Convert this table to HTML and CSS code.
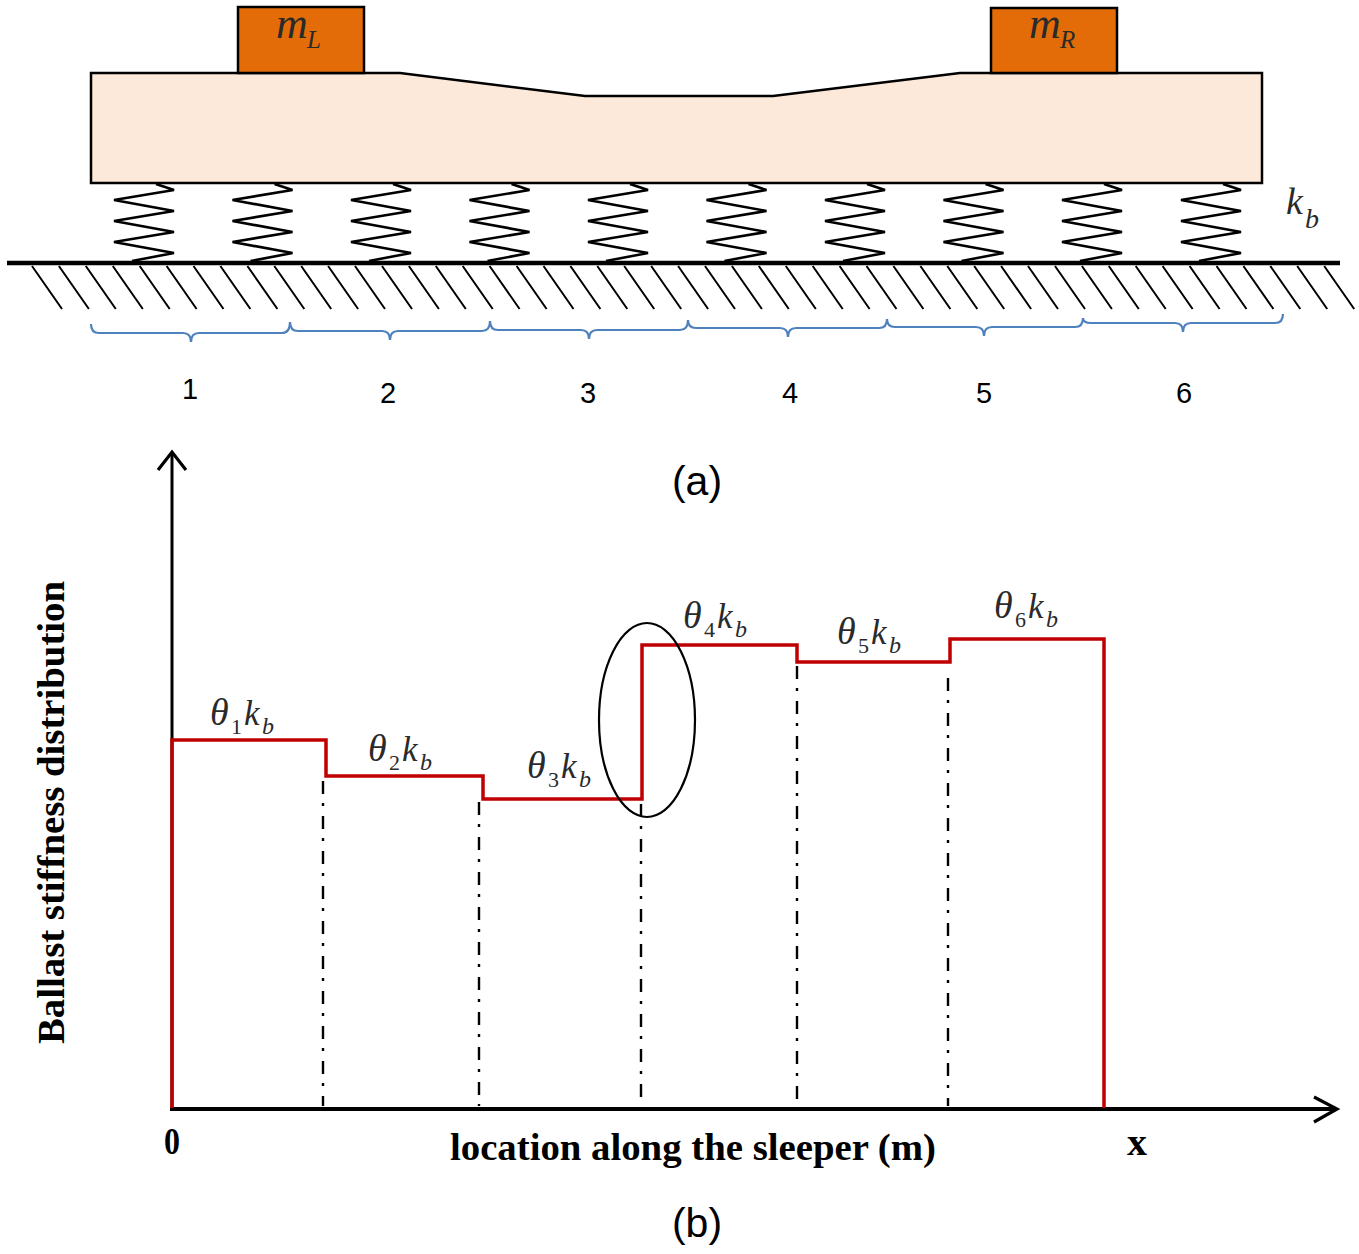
FILE: index.html
```html
<!DOCTYPE html>
<html lang="en">
<head>
<meta charset="utf-8">
<title>Ballast stiffness distribution</title>
<link rel="stylesheet" href="styles.css">
</head>
<body>
<svg class="figure" width="1359" height="1254" viewBox="0 0 1359 1254" xmlns="http://www.w3.org/2000/svg">
  <defs>
    <path id="spring" d="M12,184 L30,190 L-30,200 L30,211 L-30,221 L30,232 L-30,242 L30,253 L-12,261"/>
  </defs>

  <!-- (a) sleeper model -->
  <polygon class="sleeper" points="91,73 400,73 585,96 773,96 960,73 1262,73 1262,183 91,183"/>
  <rect class="mass" x="238" y="7" width="126" height="66"/>
  <rect class="mass" x="991" y="8" width="126" height="65"/>
  <text class="math mass-m" x="276" y="38">m</text>
  <text class="math mass-sub" x="307" y="48">L</text>
  <text class="math mass-m" x="1029" y="38">m</text>
  <text class="math mass-sub" x="1060" y="48">R</text>

  <g class="springs">
    <use href="#spring" x="144"/>
    <use href="#spring" x="262.5"/>
    <use href="#spring" x="381"/>
    <use href="#spring" x="499.5"/>
    <use href="#spring" x="618"/>
    <use href="#spring" x="736.5"/>
    <use href="#spring" x="855"/>
    <use href="#spring" x="973.5"/>
    <use href="#spring" x="1092"/>
    <use href="#spring" x="1211"/>
  </g>
  <text class="math kb-k" x="1286" y="214">k</text>
  <text class="math kb-b" x="1305" y="228">b</text>

  <line class="ground" x1="7" y1="263" x2="1340" y2="263"/>
  <path class="hatch" d="M32,266 l30,43 M58.9,266 l30,43 M85.8,266 l30,43 M112.8,266 l30,43 M139.7,266 l30,43 M166.6,266 l30,43 M193.5,266 l30,43 M220.4,266 l30,43 M247.4,266 l30,43 M274.3,266 l30,43 M301.2,266 l30,43 M328.1,266 l30,43 M355,266 l30,43 M382,266 l30,43 M408.9,266 l30,43 M435.8,266 l30,43 M462.7,266 l30,43 M489.6,266 l30,43 M516.6,266 l30,43 M543.5,266 l30,43 M570.4,266 l30,43 M597.3,266 l30,43 M624.2,266 l30,43 M651.2,266 l30,43 M678.1,266 l30,43 M705,266 l30,43 M731.9,266 l30,43 M758.8,266 l30,43 M785.8,266 l30,43 M812.7,266 l30,43 M839.6,266 l30,43 M866.5,266 l30,43 M893.4,266 l30,43 M920.4,266 l30,43 M947.3,266 l30,43 M974.2,266 l30,43 M1001.1,266 l30,43 M1028,266 l30,43 M1055,266 l30,43 M1081.9,266 l30,43 M1108.8,266 l30,43 M1135.7,266 l30,43 M1162.6,266 l30,43 M1189.6,266 l30,43 M1216.5,266 l30,43 M1243.4,266 l30,43 M1270.3,266 l30,43 M1297.2,266 l30,43 M1324.2,266 l30,43"/>

  <g class="braces">
    <path d="M91,324 Q91,333 99,333 L183,333 Q191,333 191,342 Q191,333 199,333 L282,333 Q290,333 290,322"/>
    <path d="M290,322 Q290,331 298,331 L382,331 Q390,331 390,340 Q390,331 398,331 L482,331 Q490,331 490,321"/>
    <path d="M490,321 Q490,330 498,330 L581,330 Q589,330 589,339 Q589,330 597,330 L680,330 Q688,330 688,320"/>
    <path d="M688,320 Q688,328 696,328 L780,328 Q788,328 788,337 Q788,328 796,328 L879,328 Q887,328 887,319"/>
    <path d="M887,319 Q887,327 895,327 L976,327 Q984,327 984,336 Q984,327 992,327 L1075,327 Q1083,327 1083,318"/>
    <path d="M1083,318 Q1083,323 1091,323 L1175,323 Q1183,323 1183,332 Q1183,323 1191,323 L1275,323 Q1283,323 1283,314"/>
  </g>

  <g class="seg-num">
    <text x="190" y="399">1</text>
    <text x="388" y="403">2</text>
    <text x="588" y="403">3</text>
    <text x="790" y="403">4</text>
    <text x="984" y="403">5</text>
    <text x="1184" y="403">6</text>
  </g>

  <text class="caption" x="697" y="495">(a)</text>

  <!-- (b) stiffness distribution -->
  <g class="dashdot">
    <line x1="323" y1="781" x2="323" y2="1106"/>
    <line x1="479" y1="802" x2="479" y2="1106"/>
    <line x1="641" y1="804" x2="641" y2="1106"/>
    <line x1="797" y1="666" x2="797" y2="1106"/>
    <line x1="948" y1="678" x2="948" y2="1106"/>
  </g>

  <line class="axis-y" x1="172" y1="452" x2="172" y2="1108"/>
  <polyline class="arrow" points="158,470 172,452 186,470"/>
  <line class="axis-x" x1="170" y1="1109" x2="1336" y2="1109"/>
  <polyline class="arrow" points="1314,1097 1337,1109 1314,1122"/>

  <polyline class="steps" points="172,1108 172,740 326,740 326,776 483,776 483,799 642,799 642,645 797,645 797,662 950,662 950,639 1104,639 1104,1108"/>

  <ellipse class="ring" cx="647" cy="720" rx="48" ry="97"/>

  <g class="math theta-label">
    <text class="th" x="210" y="725">θ</text><text class="num" x="231" y="734">1</text><text class="kk" x="244" y="725">k</text><text class="sub" x="262" y="734">b</text>
    <text class="th" x="368" y="761">θ</text><text class="num" x="389" y="770">2</text><text class="kk" x="402" y="761">k</text><text class="sub" x="420" y="770">b</text>
    <text class="th" x="527" y="778">θ</text><text class="num" x="548" y="787">3</text><text class="kk" x="561" y="778">k</text><text class="sub" x="579" y="787">b</text>
    <text class="th" x="683" y="628">θ</text><text class="num" x="704" y="637">4</text><text class="kk" x="717" y="628">k</text><text class="sub" x="735" y="637">b</text>
    <text class="th" x="837" y="644">θ</text><text class="num" x="858" y="653">5</text><text class="kk" x="871" y="644">k</text><text class="sub" x="889" y="653">b</text>
    <text class="th" x="994" y="618">θ</text><text class="num" x="1015" y="627">6</text><text class="kk" x="1028" y="618">k</text><text class="sub" x="1046" y="627">b</text>
  </g>

  <text class="axis-label" transform="translate(64,1044) rotate(-90)" textLength="463" lengthAdjust="spacingAndGlyphs">Ballast stiffness distribution</text>
  <text class="axis-label" x="450" y="1160" textLength="486" lengthAdjust="spacingAndGlyphs">location along the sleeper (m)</text>
  <text class="axis-label" x="164" y="1154" textLength="16" lengthAdjust="spacingAndGlyphs">0</text>
  <text class="axis-label" x="1127" y="1155" textLength="20" lengthAdjust="spacingAndGlyphs">x</text>

  <text class="caption" x="697" y="1237">(b)</text>
</svg>
</body>
</html>
```

FILE: styles.css
```css
html, body {
  margin: 0;
  padding: 0;
  background: #ffffff;
}

.figure {
  display: block;
}

.sleeper {
  fill: #fde9d9;
  stroke: #000000;
  stroke-width: 2.5;
  stroke-linejoin: miter;
}

.mass {
  fill: #e36c09;
  stroke: #000000;
  stroke-width: 2.5;
}

.springs use {
  fill: none;
  stroke: #000000;
  stroke-width: 2.6;
  stroke-linejoin: miter;
}

.ground {
  stroke: #000000;
  stroke-width: 4.5;
}

.hatch {
  fill: none;
  stroke: #000000;
  stroke-width: 2;
}

.braces path {
  fill: none;
  stroke: #4f81bd;
  stroke-width: 2.2;
}

.seg-num text {
  font-family: "Liberation Sans", Arial, sans-serif;
  font-size: 29px;
  fill: #000000;
  text-anchor: middle;
}

.caption {
  font-family: "Liberation Sans", Arial, sans-serif;
  font-size: 41px;
  fill: #000000;
  text-anchor: middle;
}

.math {
  font-family: "Liberation Serif", "Times New Roman", serif;
  font-style: italic;
  fill: #2a2a2a;
}

.mass-m { font-size: 44px; }
.mass-sub { font-size: 25px; }
.kb-k { font-size: 38px; }
.kb-b { font-size: 28px; }

.theta-label .th { font-size: 38px; }
.theta-label .kk { font-size: 35px; }
.theta-label .sub { font-size: 24px; }
.theta-label .num {
  font-size: 22px;
  font-style: normal;
}

.dashdot line {
  stroke: #000000;
  stroke-width: 2.4;
  stroke-dasharray: 13 9 3 10;
}

.axis-y {
  stroke: #000000;
  stroke-width: 3;
}

.axis-x {
  stroke: #000000;
  stroke-width: 4;
}

.arrow {
  fill: none;
  stroke: #000000;
  stroke-width: 3.2;
  stroke-linejoin: miter;
}

.steps {
  fill: none;
  stroke: #c00000;
  stroke-width: 3.5;
  stroke-linejoin: miter;
}

.ring {
  fill: none;
  stroke: #000000;
  stroke-width: 2.2;
}

.axis-label {
  font-family: "Liberation Serif", "Times New Roman", serif;
  font-weight: bold;
  font-size: 38px;
  fill: #000000;
}
```
